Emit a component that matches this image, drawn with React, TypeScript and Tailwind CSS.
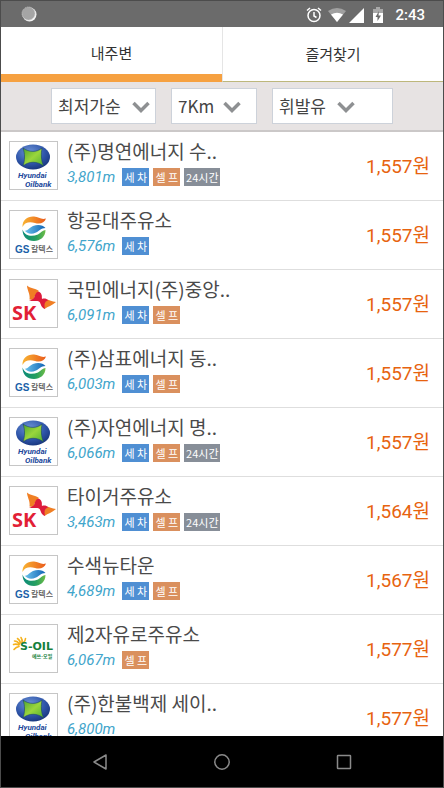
import React, { useState } from 'react';

type Brand = 'hyundai' | 'gs' | 'sk' | 'soil';
type Tag = '세 차' | '셀 프' | '24시간';

interface Station {
  name: string;
  brand: Brand;
  distance: string;
  tags: Tag[];
  price: string;
}

const stations: Station[] = [
  { name: '(주)명연에너지 수..', brand: 'hyundai', distance: '3,801m', tags: ['세 차', '셀 프', '24시간'], price: '1,557원' },
  { name: '항공대주유소', brand: 'gs', distance: '6,576m', tags: ['세 차'], price: '1,557원' },
  { name: '국민에너지(주)중앙..', brand: 'sk', distance: '6,091m', tags: ['세 차', '셀 프'], price: '1,557원' },
  { name: '(주)삼표에너지 동..', brand: 'gs', distance: '6,003m', tags: ['세 차', '셀 프'], price: '1,557원' },
  { name: '(주)자연에너지 명..', brand: 'hyundai', distance: '6,066m', tags: ['세 차', '셀 프', '24시간'], price: '1,557원' },
  { name: '타이거주유소', brand: 'sk', distance: '3,463m', tags: ['세 차', '셀 프', '24시간'], price: '1,564원' },
  { name: '수색뉴타운', brand: 'gs', distance: '4,689m', tags: ['세 차', '셀 프'], price: '1,567원' },
  { name: '제2자유로주유소', brand: 'soil', distance: '6,067m', tags: ['셀 프'], price: '1,577원' },
  { name: '(주)한불백제 세이..', brand: 'hyundai', distance: '6,800m', tags: [], price: '1,577원' },
];

const tagColors: Record<Tag, string> = {
  '세 차': 'w-[27px] bg-[#4f8fd3]',
  '셀 프': 'w-[27px] bg-[#da905e]',
  '24시간': 'w-9 bg-[#878e98]',
};

const filters = [
  { id: 'sort', label: '정렬', options: ['최저가순', '거리순'], width: 'w-[105px]', arrow: 'right-1.5' },
  { id: 'radius', label: '반경', options: ['7Km', '5Km', '3Km'], width: 'w-[86px]', arrow: 'right-4' },
  { id: 'fuel', label: '유종', options: ['휘발유', '경유', 'LPG'], width: 'w-[121px]', arrow: 'right-[38px]' },
];

const HyundaiLogo = () => (
  <svg viewBox="0 0 47 47" className="h-full w-full" role="img" aria-label="Hyundai Oilbank">
    <defs>
      <radialGradient id="hdBlue" cx="0.4" cy="0.3" r="0.75">
        <stop offset="0" stopColor="#6d93d6" />
        <stop offset="0.6" stopColor="#2f56aa" />
        <stop offset="1" stopColor="#173379" />
      </radialGradient>
      <linearGradient id="hdGreen" x1="0" y1="0" x2="1" y2="1">
        <stop offset="0" stopColor="#4da32f" />
        <stop offset="0.5" stopColor="#9ad63c" />
        <stop offset="1" stopColor="#4fae32" />
      </linearGradient>
    </defs>
    <ellipse cx="23" cy="15" rx="17" ry="12.5" fill="url(#hdBlue)" />
    <path d="M13 6C19 10.500 27 10.500 32 6C31 12 31 18 33.500 24C27 19 19 19 13 24C15 18 15 12 13 6Z" fill="url(#hdGreen)" stroke="#173f6d" strokeWidth="0.6" />
    <text x="8" y="36" className="font-[Roboto,sans-serif] text-[8px] font-bold italic" fill="#234a9c">Hyundai</text>
    <text x="15" y="45" className="font-[Roboto,sans-serif] text-[8px] font-bold italic" fill="#234a9c">Oilbank</text>
  </svg>
);

const GsLogo = () => (
  <svg viewBox="0 0 47 47" className="h-full w-full" role="img" aria-label="GS 칼텍스">
    <defs>
      <linearGradient id="gsOrange" x1="0" y1="0" x2="1" y2="0">
        <stop offset="0" stopColor="#f8b433" />
        <stop offset="1" stopColor="#ea5b1b" />
      </linearGradient>
      <linearGradient id="gsBlue" x1="0" y1="0" x2="1" y2="0">
        <stop offset="0" stopColor="#6cc4ec" />
        <stop offset="1" stopColor="#0f62b4" />
      </linearGradient>
      <linearGradient id="gsGreen" x1="0" y1="0" x2="1" y2="0">
        <stop offset="0" stopColor="#0a8a7a" />
        <stop offset="0.6" stopColor="#27a05f" />
        <stop offset="1" stopColor="#6ebc45" />
      </linearGradient>
    </defs>
    <path d="M12.500 16C12 9 18 5 24 5.500C29 6 31 9 36 7.500C34.500 12 30 13.500 25 12C19 10.500 15 11.500 12.500 16Z" fill="url(#gsOrange)" />
    <path d="M14.500 19.500C17 20.500 19 17 23 15C28 13 33 14 35.500 17C31 17 29 20 26 21.500C21 24 17 22.500 14.500 19.500Z" fill="url(#gsBlue)" />
    <path d="M12.500 18.500C15 25.500 22 26 28 23.500C31 21.500 33 19 35.500 19C35.500 26 30 30 24 30C17 30 12.500 25.500 12.500 18.500Z" fill="url(#gsGreen)" />
    <text x="5" y="42" className="text-[10px] font-bold" fill="#1a5fa8">GS</text>
    <text x="21" y="41" className="font-['Noto_Sans_CJK_KR',sans-serif] text-[8px] font-medium" fill="#555">칼텍스</text>
  </svg>
);

const SkLogo = () => (
  <svg viewBox="0 0 47 47" className="h-full w-full" role="img" aria-label="SK">
    <path d="M17 5.500C20 8.500 25 8 29 11C26 13.500 24 17 23.500 20L19.500 19.500C20.500 14 17 10 17 5.500Z" fill="#f07f24" />
    <path d="M37 19.500C39 20 42 21.500 46 22C42 25.500 38 26.500 34.500 29C33 25 34 22 37 19.500Z" fill="#f07f24" />
    <path d="M19 20C23 20 24.500 18 25 15C26.500 11.500 29 10.500 31 13.500C32.500 16 31.500 17.500 32 19C34 18 37 18.500 38 20.500C34.500 21.500 34 24.500 35 29C31.500 27.500 31 25 30 22.500C28 19.500 23 22.500 19 20Z" fill="#dd1c3c" />
    <text x="2" y="40" className="font-['Open_Sans',sans-serif] text-[20px] font-bold" fill="#e21f36">SK</text>
  </svg>
);

const SoilLogo = () => (
  <svg viewBox="0 0 47 47" className="h-full w-full" role="img" aria-label="S-OIL 에쓰-오일">
    <g stroke="#f5b21d" strokeWidth="1.600" strokeLinecap="round" fill="none">
      <path d="M9 21.500Q6 22 4 24.500M9 20Q6 18.500 3.500 19.500M9.500 19Q7.500 16 4.500 16M10.500 18Q10 15 7.500 13.500M12 17.500Q12.500 14.500 11 12.500M13.500 17.500Q15.500 15.500 15.500 13.500" />
    </g>
    <text x="10" y="25" className="font-['DejaVu_Sans',sans-serif] text-[11px] font-bold" fill="#14803c">S-OIL</text>
    <text x="22" y="33" className="font-['Noto_Sans_CJK_KR',sans-serif] text-[5px] font-bold" fill="#14803c">에쓰-오일</text>
  </svg>
);

const logos: Record<Brand, React.FC> = {
  hyundai: HyundaiLogo,
  gs: GsLogo,
  sk: SkLogo,
  soil: SoilLogo,
};

const StatusBar = () => (
  <div className="flex h-[26px] shrink-0 items-center justify-between bg-[#6b6b6b] pr-[18px] pl-5 text-white">
    <svg viewBox="0 0 16 16" className="size-4" aria-hidden="true">
      <circle cx="8.500" cy="8.500" r="7" fill="#f4f4f4" />
      <circle cx="7.500" cy="7.500" r="6.500" fill="#a5a5a5" stroke="#c4c4c4" strokeDasharray="1 1" />
    </svg>
    <div className="flex items-center pt-0.5">
      <svg viewBox="0 0 16 16" className="mr-1.5 size-4" fill="none" stroke="currentColor" strokeWidth="1.500" aria-hidden="true">
        <circle cx="8" cy="8.500" r="6" />
        <path d="M8 5V9L10.500 10.500M1 3.500L4 1M15 3.500L12 1" />
      </svg>
      <svg viewBox="0 0 18 14" className="h-3.5 w-[18px]" aria-hidden="true">
        <path d="M0 3Q9 -3 18 3L9 14Z" fill="#a0a0a0" />
        <path d="M3 6.500Q9 3 15 6.500L9 14Z" fill="#fff" />
      </svg>
      <svg viewBox="0 0 15 15" className="ml-[3px] size-[15px]" aria-hidden="true">
        <path d="M15 0V15H0Z" fill="#fff" />
      </svg>
      <svg viewBox="0 0 10 16" className="ml-[9px] h-4 w-2.5" aria-hidden="true">
        <path d="M3 0H7V2H10V6H0V2H3Z" fill="#a8a8a8" />
        <path d="M0 6H10V16H0Z" fill="#fff" />
        <path d="M6 4L2.500 10H4.500V14L8 8.500H5.500Z" fill="#6b6b6b" />
      </svg>
      <span className="ml-3 font-[Roboto,sans-serif] text-[15px] font-medium">2:43</span>
    </div>
  </div>
);

const App: React.FC = () => {
  const [tab, setTab] = useState<'nearby' | 'favorites'>('nearby');

  return (
    <div className="flex h-screen flex-col border border-[#4c4c4c] bg-white font-['Liberation_Sans','Noto_Sans_CJK_KR',sans-serif]">
      <StatusBar />

      <nav className="grid h-[55px] shrink-0 grid-cols-2 font-['Noto_Sans_CJK_KR',sans-serif] text-[15px] text-[#333]">
        <button
          onClick={() => setTab('nearby')}
          className={tab === 'nearby' ? 'border-b-8 border-[#f6a141] pt-1.5' : 'border-b border-[#bdb77c]'}
        >
          내주변
        </button>
        <button
          onClick={() => setTab('favorites')}
          className={tab === 'favorites' ? 'border-b-8 border-[#f6a141] pt-1.5' : 'border-b border-l border-b-[#bdb77c] border-l-[#e5e5e5]'}
        >
          즐겨찾기
        </button>
      </nav>

      <div className="flex h-[50px] shrink-0 items-center justify-center gap-[15px] border-b-2 border-[#cbc8c8] bg-[#e7e3e3]">
        {filters.map((filter) => (
          <div key={filter.id} className={`relative ${filter.width}`}>
            <select
              id={filter.id}
              aria-label={filter.label}
              className="block h-9 w-full appearance-none border border-[#cdd2da] bg-white pl-1.5 font-['Noto_Sans_CJK_KR',sans-serif] text-[17px] leading-8 text-[#444]"
            >
              {filter.options.map((option) => (
                <option key={option}>{option}</option>
              ))}
            </select>
            <svg
              viewBox="0 0 18 12"
              className={`pointer-events-none absolute top-[13px] h-3 w-[18px] ${filter.arrow}`}
              aria-hidden="true"
            >
              <path d="M1.500 2L9 9.500L16.500 2" fill="none" stroke="#8e9092" strokeWidth="3.500" />
            </svg>
          </div>
        ))}
      </div>

      <ul className="min-h-0 flex-1 overflow-hidden">
        {stations.map((station) => {
          const Logo = logos[station.brand];
          return (
            <li key={station.name} className="flex h-[69px] items-center border-b border-[#dedede] pr-[13px] pb-0.5 pl-2">
              <div className="size-[49px] shrink-0 border border-[#c6c6c6]">
                <Logo />
              </div>
              <div className="ml-[9px] min-w-0 flex-1 pb-1">
                <h3 className="truncate font-['Noto_Sans_CJK_KR',sans-serif] text-[19px] leading-7 text-[#4a4a4a]">{station.name}</h3>
                <div className="flex h-6 items-center gap-1">
                  <span className="mr-[3px] font-[Roboto,sans-serif] text-[15px] text-[#41a5cb] italic">{station.distance}</span>
                  {station.tags.map((tag) => (
                    <span
                      key={tag}
                      className={`h-[18px] text-center font-['Noto_Sans_CJK_KR',sans-serif] text-[11px] leading-[18px] whitespace-nowrap text-white ${tagColors[tag]}`}
                    >
                      {tag}
                    </span>
                  ))}
                </div>
              </div>
              <span className="pt-1 font-[Roboto,'Noto_Sans_CJK_KR',sans-serif] text-[19px] text-[#e7630f]">{station.price}</span>
            </li>
          );
        })}
      </ul>

      <div className="grid h-[51px] shrink-0 grid-cols-[1fr_auto_1fr] items-center gap-[106px] bg-black text-[#8a8a8a]">
        <button aria-label="뒤로" className="justify-self-end">
          <svg viewBox="0 0 16 16" className="size-4" fill="none" stroke="currentColor" strokeWidth="1.500">
            <path d="M14 1V15L2 8Z" strokeLinejoin="round" />
          </svg>
        </button>
        <button aria-label="홈">
          <svg viewBox="0 0 16 16" className="size-4" fill="none" stroke="currentColor" strokeWidth="1.500">
            <circle cx="8" cy="8" r="7.200" />
          </svg>
        </button>
        <button aria-label="최근 앱" className="justify-self-start">
          <svg viewBox="0 0 16 16" className="size-4" fill="none" stroke="currentColor" strokeWidth="1.500">
            <rect x="1.500" y="1.500" width="13" height="13" rx="0.500" />
          </svg>
        </button>
      </div>
    </div>
  );
};

export default App;
